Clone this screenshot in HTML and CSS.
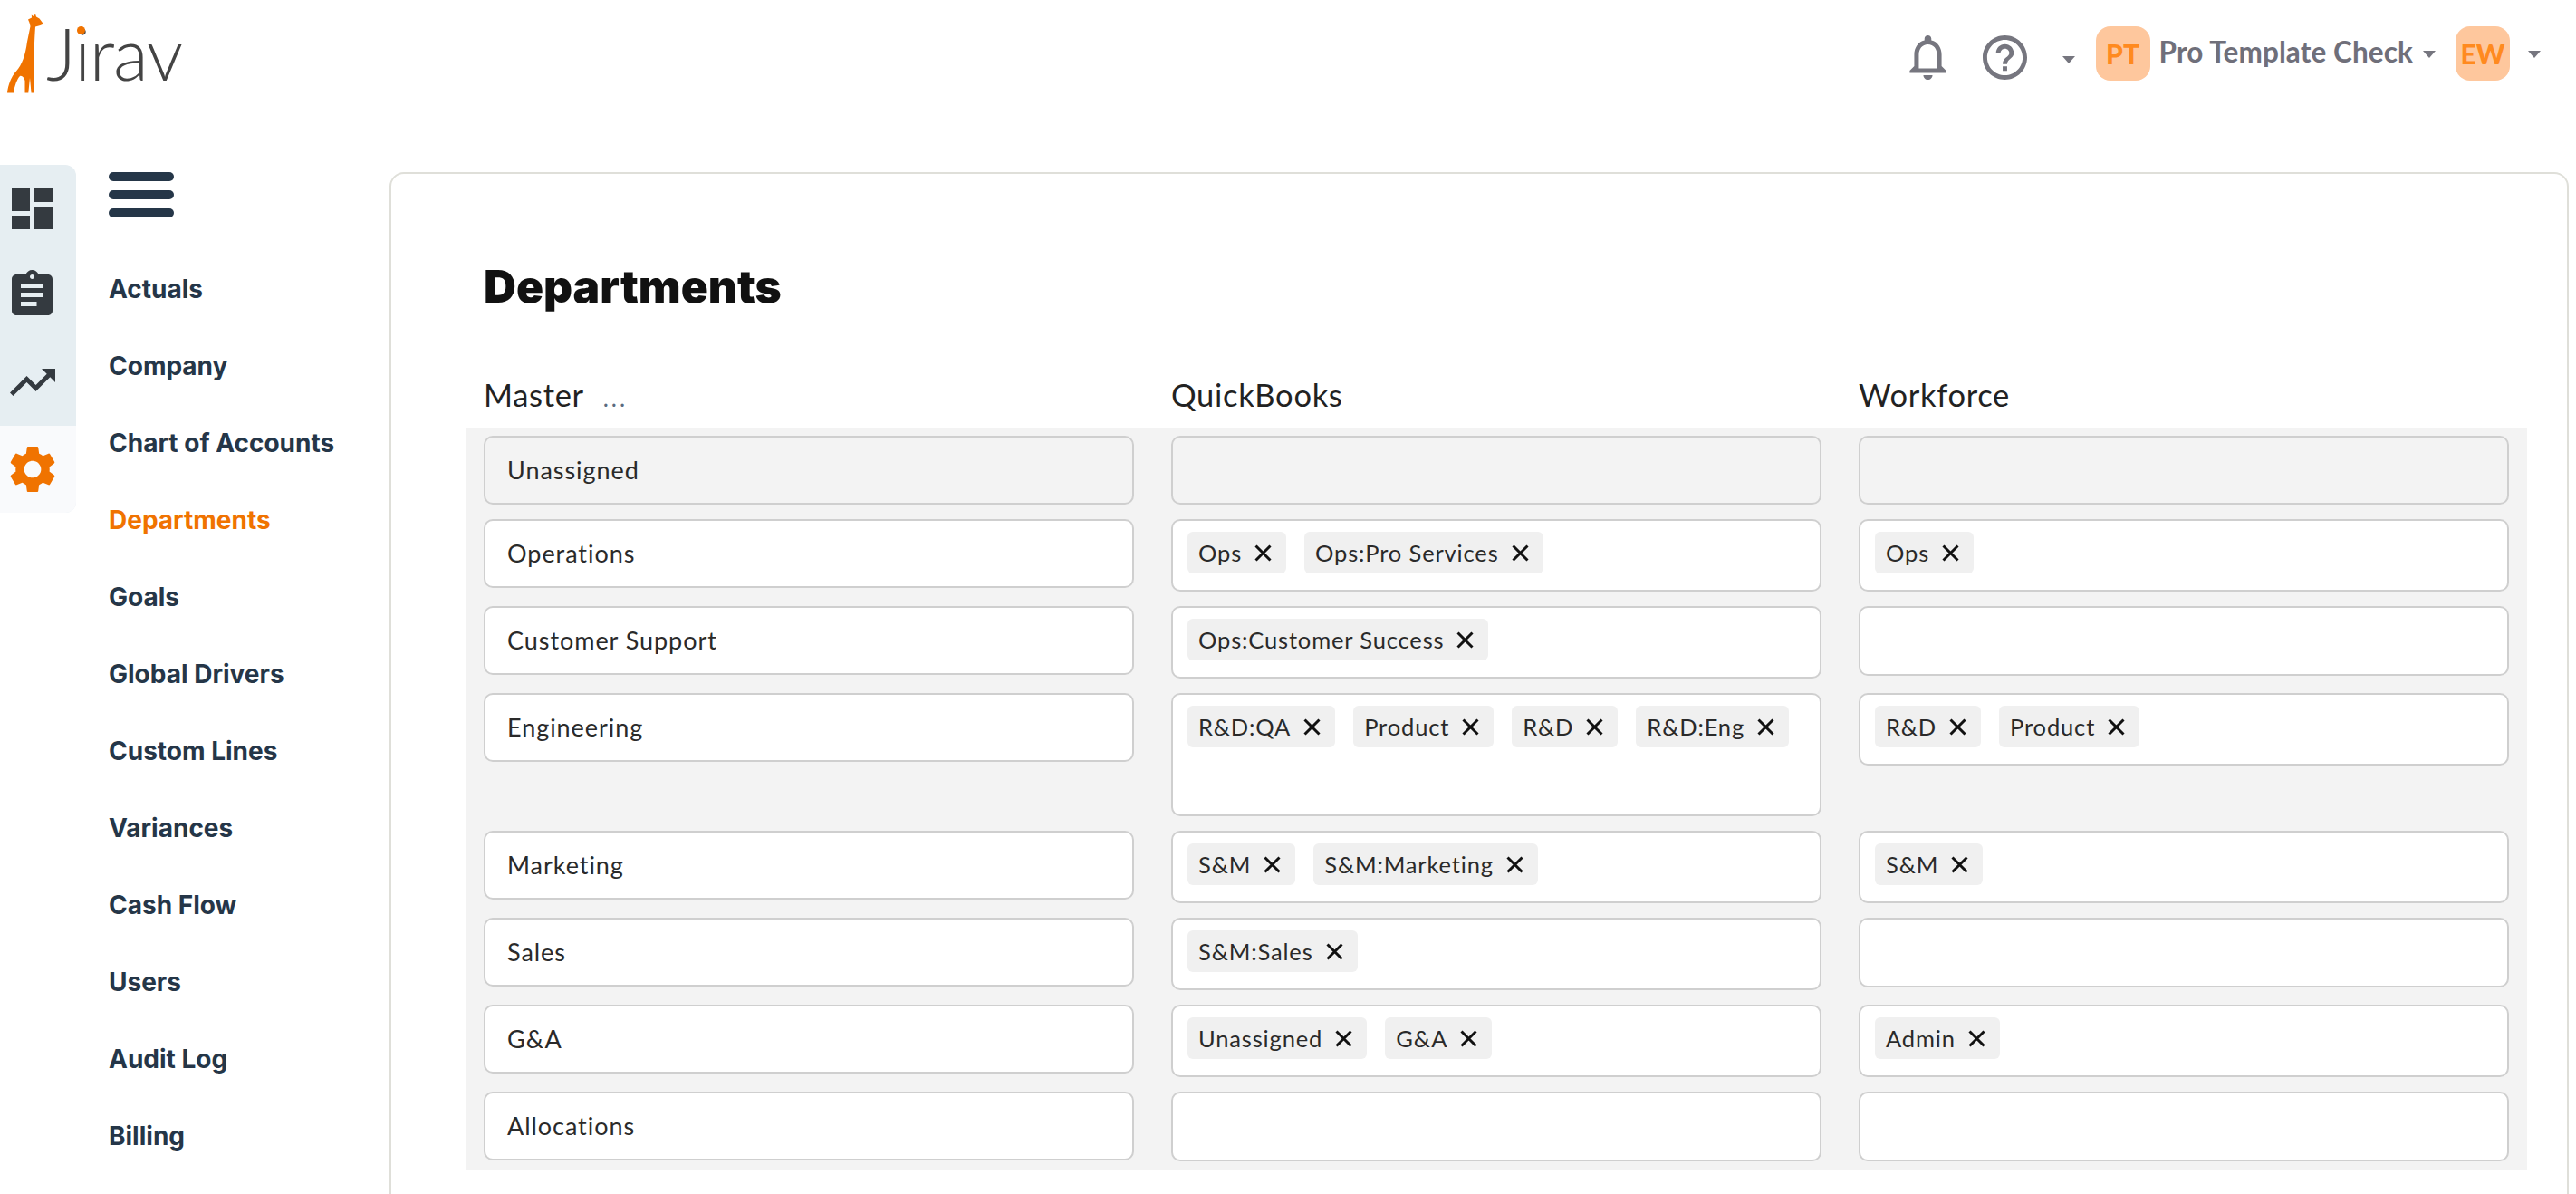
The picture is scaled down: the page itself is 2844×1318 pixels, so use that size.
FILE: index.html
```html
<!DOCTYPE html>
<html lang="en">
<head>
<meta charset="utf-8">
<title>Jirav - Departments</title>
<link rel="stylesheet" href="styles.css">
</head>
<body>
<header class="topbar">
  <a class="logo">
    <svg class="giraffe" viewBox="0 0 42 90" aria-hidden="true"><path d="M23 6.500 L27 4.500 L26.800 1.500 L29 3 L31 .5 L32 3.500 L35.500 5.500 L40 11.500 L36.500 13 L31 14.500 C30 30 29.300 45 29.500 63 L30 87.500 L26.500 87.500 L25 71 L23.300 87.500 L19.500 87.500 L19.500 74 C18.500 71 16.500 68 14 69 C11 72 8 80 7 87.500 L0 87.500 C1 79 4 70 10 63.500 C16 57 20 46 22 31 L25.500 14 L24.500 10 Z"/></svg>
    <span class="wordmark">Jirav<span class="i-dot"></span></span>
  </a>
  <div class="actions">
    <svg class="icon-bell" viewBox="4 2.500 16 19.500" aria-hidden="true"><path d="M12 22c1.100 0 2-.9 2-2h-4c0 1.100.9 2 2 2zm6-6v-5c0-3.070-1.630-5.640-4.500-6.320V4c0-.83-.67-1.500-1.500-1.500s-1.500.67-1.500 1.500v.68C7.640 5.360 6 7.920 6 11v5l-2 2v1h16v-1l-2-2zm-2 1H8v-6c0-2.480 1.510-4.500 4-4.500s4 2.020 4 4.500v6z"/></svg>
    <svg class="icon-help" viewBox="2 2 20 20" aria-hidden="true"><path d="M11 18h2v-2h-2v2zm1-16C6.480 2 2 6.480 2 12s4.480 10 10 10 10-4.480 10-10S17.520 2 12 2zm0 18c-4.410 0-8-3.590-8-8s3.590-8 8-8 8 3.590 8 8-3.590 8-8 8zm0-14c-2.210 0-4 1.790-4 4h2c0-1.100.9-2 2-2s2 .9 2 2c0 2-3 1.750-3 5h2c0-2.250 3-2.500 3-5 0-2.210-1.790-4-4-4z"/></svg>
    <span class="caret caret-help"></span>
    <span class="avatar avatar-org">PT</span>
    <span class="org-name">Pro Template Check</span>
    <span class="caret caret-org"></span>
    <span class="avatar avatar-user">EW</span>
    <span class="caret caret-user"></span>
  </div>
</header>

<div class="body">
  <aside class="rail">
    <div class="rail-item"><svg class="rail-dash" viewBox="3 3 18 18" aria-hidden="true"><path d="M3 13h8V3H3v10zm0 8h8v-6H3v6zm10 0h8V11h-8v10zm0-18v6h8V3h-8z"/></svg></div>
    <div class="rail-item rail-item-raised"><svg class="rail-clip" viewBox="3 1 18 20" aria-hidden="true"><path d="M19 3h-4.180C14.400 1.840 13.300 1 12 1c-1.300 0-2.400.84-2.820 2H5c-1.100 0-2 .9-2 2v14c0 1.100.9 2 2 2h14c1.100 0 2-.9 2-2V5c0-1.100-.9-2-2-2zm-7 0c.55 0 1 .45 1 1s-.45 1-1 1-1-.45-1-1 .45-1 1-1zm2 14H7v-2h7v2zm3-4H7v-2h10v2zm0-4H7V7h10v2z"/></svg></div>
    <div class="rail-item"><svg class="rail-trend" viewBox="2 6 20 12" aria-hidden="true"><path d="M16 6l2.290 2.290-4.880 4.880-4-4L2 16.590 3.410 18l6-6 4 4 6.300-6.290L22 12V6z"/></svg></div>
    <div class="rail-item rail-item-active"><svg class="rail-gear" viewBox="2.500 2 19 20" aria-hidden="true"><path d="M19.140 12.940c.04-.3.06-.61.06-.94 0-.32-.02-.64-.07-.94l2.030-1.580c.18-.14.23-.41.12-.61l-1.920-3.320c-.12-.22-.37-.29-.59-.22l-2.390.96c-.5-.38-1.030-.7-1.620-.94l-.36-2.540c-.04-.24-.24-.41-.48-.41h-3.840c-.24 0-.43.17-.47.41l-.36 2.540c-.59.24-1.130.57-1.620.94l-2.390-.96c-.22-.08-.47 0-.59.22L2.740 8.870c-.12.21-.08.47.12.61l2.030 1.580c-.05.3-.09.63-.09.94s.02.64.07.94l-2.030 1.580c-.18.14-.23.41-.12.61l1.920 3.320c.12.22.37.29.59.22l2.390-.96c.5.38 1.030.7 1.620.94l.36 2.540c.05.24.24.41.48.41h3.840c.24 0 .44-.17.47-.41l.36-2.540c.59-.24 1.130-.56 1.620-.94l2.390.96c.22.08.47 0 .59-.22l1.920-3.320c.12-.22.07-.47-.12-.61l-2.010-1.580zM12 15.600c-1.980 0-3.600-1.620-3.600-3.600s1.620-3.600 3.600-3.600 3.600 1.620 3.600 3.600-1.620 3.600-3.600 3.600z"/></svg></div>
  </aside>

  <nav class="nav">
    <div class="hamburger"><span></span><span></span><span></span></div>
    <ul class="nav-list">
      <li>Actuals</li>
      <li>Company</li>
      <li>Chart of Accounts</li>
      <li class="is-active">Departments</li>
      <li>Goals</li>
      <li>Global Drivers</li>
      <li>Custom Lines</li>
      <li>Variances</li>
      <li>Cash Flow</li>
      <li>Users</li>
      <li>Audit Log</li>
      <li>Billing</li>
    </ul>
  </nav>

  <main class="card">
    <h1 class="title">Departments</h1>
    <div class="col-heads">
      <div class="col-head">Master <span class="more">...</span></div>
      <div class="col-head">QuickBooks</div>
      <div class="col-head">Workforce</div>
    </div>
    <div class="map-grid">
      <div class="field is-disabled">Unassigned</div>
      <div class="multi is-disabled"></div>
      <div class="multi is-disabled"></div>

      <div class="field">Operations</div>
      <div class="multi">
        <span class="tag">Ops<svg class="x" viewBox="0 0 19 19"><path d="M1.500 1.500l16 16M17.500 1.500l-16 16"/></svg></span>
        <span class="tag">Ops:Pro Services<svg class="x" viewBox="0 0 19 19"><path d="M1.500 1.500l16 16M17.500 1.500l-16 16"/></svg></span>
      </div>
      <div class="multi">
        <span class="tag">Ops<svg class="x" viewBox="0 0 19 19"><path d="M1.500 1.500l16 16M17.500 1.500l-16 16"/></svg></span>
      </div>

      <div class="field">Customer Support</div>
      <div class="multi">
        <span class="tag">Ops:Customer Success<svg class="x" viewBox="0 0 19 19"><path d="M1.500 1.500l16 16M17.500 1.500l-16 16"/></svg></span>
      </div>
      <div class="multi"></div>

      <div class="field">Engineering</div>
      <div class="multi multi-tall">
        <span class="tag">R&amp;D:QA<svg class="x" viewBox="0 0 19 19"><path d="M1.500 1.500l16 16M17.500 1.500l-16 16"/></svg></span>
        <span class="tag">Product<svg class="x" viewBox="0 0 19 19"><path d="M1.500 1.500l16 16M17.500 1.500l-16 16"/></svg></span>
        <span class="tag">R&amp;D<svg class="x" viewBox="0 0 19 19"><path d="M1.500 1.500l16 16M17.500 1.500l-16 16"/></svg></span>
        <span class="tag">R&amp;D:Eng<svg class="x" viewBox="0 0 19 19"><path d="M1.500 1.500l16 16M17.500 1.500l-16 16"/></svg></span>
      </div>
      <div class="multi">
        <span class="tag">R&amp;D<svg class="x" viewBox="0 0 19 19"><path d="M1.500 1.500l16 16M17.500 1.500l-16 16"/></svg></span>
        <span class="tag">Product<svg class="x" viewBox="0 0 19 19"><path d="M1.500 1.500l16 16M17.500 1.500l-16 16"/></svg></span>
      </div>

      <div class="field">Marketing</div>
      <div class="multi">
        <span class="tag">S&amp;M<svg class="x" viewBox="0 0 19 19"><path d="M1.500 1.500l16 16M17.500 1.500l-16 16"/></svg></span>
        <span class="tag">S&amp;M:Marketing<svg class="x" viewBox="0 0 19 19"><path d="M1.500 1.500l16 16M17.500 1.500l-16 16"/></svg></span>
      </div>
      <div class="multi">
        <span class="tag">S&amp;M<svg class="x" viewBox="0 0 19 19"><path d="M1.500 1.500l16 16M17.500 1.500l-16 16"/></svg></span>
      </div>

      <div class="field">Sales</div>
      <div class="multi">
        <span class="tag">S&amp;M:Sales<svg class="x" viewBox="0 0 19 19"><path d="M1.500 1.500l16 16M17.500 1.500l-16 16"/></svg></span>
      </div>
      <div class="multi"></div>

      <div class="field">G&amp;A</div>
      <div class="multi">
        <span class="tag">Unassigned<svg class="x" viewBox="0 0 19 19"><path d="M1.500 1.500l16 16M17.500 1.500l-16 16"/></svg></span>
        <span class="tag">G&amp;A<svg class="x" viewBox="0 0 19 19"><path d="M1.500 1.500l16 16M17.500 1.500l-16 16"/></svg></span>
      </div>
      <div class="multi">
        <span class="tag">Admin<svg class="x" viewBox="0 0 19 19"><path d="M1.500 1.500l16 16M17.500 1.500l-16 16"/></svg></span>
      </div>

      <div class="field">Allocations</div>
      <div class="multi multi-empty"></div>
      <div class="multi multi-empty"></div>
    </div>
  </main>
</div>
</body>
</html>
```

FILE: styles.css
```css
* { box-sizing: border-box; }

html, body {
  margin: 0;
  height: 100%;
  overflow: hidden;
  background: #fff;
}

body {
  display: flex;
  flex-direction: column;
  font-family: "Lato", "Open Sans", sans-serif;
  color: #222;
}

/* top bar */
.topbar {
  flex: 0 0 182px;
  display: flex;
  align-items: flex-start;
  justify-content: space-between;
}

.logo {
  position: relative;
  display: flex;
  align-items: flex-start;
  padding: 15px 0 0 8px;
}

.giraffe {
  width: 42px;
  height: 90px;
  fill: #f07300;
}

.wordmark {
  position: relative;
  margin: -5px 0 0 1px;
  font-family: "Lato", sans-serif;
  font-weight: 300;
  font-size: 80px;
  line-height: 96px;
  letter-spacing: -1.2px;
  color: #444;
}

.i-dot {
  position: absolute;
  left: 34px;
  top: 19px;
  width: 9px;
  height: 9px;
  border-radius: 50%;
  background: #f07300;
}

.actions {
  display: flex;
  align-items: flex-start;
  padding: 29px 39px 0 0;
  fill: #76767f;
}

.icon-bell {
  width: 41px;
  height: 49px;
  margin-top: 10px;
}

.icon-help {
  width: 49px;
  height: 49px;
  margin: 10px 0 0 40px;
}

.caret {
  width: 0;
  height: 0;
  border-left: 7px solid transparent;
  border-right: 7px solid transparent;
  border-top: 8px solid #76767f;
}

.caret-help { margin: 33px 23px 0 39px; }
.caret-org { margin: 27px 22px 0 11px; }
.caret-user { margin: 27px 0 0 20px; }

.avatar {
  width: 60px;
  height: 60px;
  border-radius: 16px;
  background: #fec79d;
  color: #ff8a1f;
  font-weight: 900;
  font-size: 30px;
  line-height: 60px;
  text-align: center;
}

.org-name {
  margin-left: 10px;
  font-weight: 700;
  font-size: 31.500px;
  letter-spacing: .1px;
  line-height: 56px;
  color: #6f6f7a;
}

/* layout under the bar */
.body {
  flex: 1;
  display: flex;
  align-items: flex-start;
  min-height: 0;
}

/* icon rail */
.rail {
  flex: 0 0 84px;
  border-radius: 0 12px 12px 0;
  overflow: hidden;
  background: #e6eef2;
}

.rail-item {
  height: 96px;
  padding-right: 13px;
  display: flex;
  align-items: center;
  justify-content: center;
  fill: #343a40;
}

.rail-item-raised { padding-bottom: 6px; }

.rail-item-active {
  background: #f9fafc;
  fill: #f07300;
}

.rail-dash { width: 45px; height: 45px; }
.rail-clip { width: 45px; height: 50px; }
.rail-trend { width: 50px; height: 30px; }
.rail-gear { width: 50px; height: 52px; }

/* text nav */
.nav {
  flex: 0 0 346px;
  padding: 8px 0 0 36px;
}

.hamburger {
  display: flex;
  flex-direction: column;
  gap: 10px;
  width: 72px;
}

.hamburger span {
  height: 10px;
  border-radius: 5px;
  background: #253648;
}

.nav-list {
  list-style: none;
  margin: 37px 0 0;
  padding: 0;
  font-family: "Inter", sans-serif;
  font-weight: 700;
  font-size: 28px;
  line-height: 85px;
  color: #253648;
}

.nav-list .is-active { color: #f07300; }

/* content card */
.card {
  flex: 1;
  height: 1200px;
  margin: 8px 8px 0 0;
  padding: 0 44px 0 82px;
  border: 2px solid #dfdfd9;
  border-radius: 16px;
}

.title {
  margin: 0;
  padding: 94px 0 0 20px;
  font-family: "Inter", sans-serif;
  font-weight: 900;
  font-size: 49.700px;
  line-height: 60px;
  color: #111;
}

.col-heads,
.map-grid {
  display: grid;
  grid-template-columns: repeat(3, 718px);
  column-gap: 41px;
}

.col-heads {
  margin-top: 51px;
  padding: 19px 20px 0;
  height: 76px;
}

.col-head {
  font-size: 34.500px;
  line-height: 40px;
  letter-spacing: .7px;
  color: #222;
}

.more {
  margin-left: 12px;
  font-size: 26px;
  letter-spacing: 3px;
  color: #5a6b80;
}

.map-grid {
  align-items: start;
  row-gap: 16px;
  padding: 8px 20px 9px;
  background: #f3f3f3;
}

.field,
.multi {
  border: 2px solid #cfcfcf;
  border-radius: 10px;
  background: #fff;
}

.field {
  height: 76px;
  padding: 0 24px;
  font-size: 27px;
  line-height: 72px;
  letter-spacing: .95px;
  color: #2a2a2a;
}

.multi {
  display: flex;
  flex-wrap: wrap;
  align-content: flex-start;
  gap: 20px;
  min-height: 80px;
  padding: 12px 16px;
}

.multi:empty { min-height: 77px; }
.multi-tall { min-height: 136px; }

.field.is-disabled,
.multi.is-disabled {
  min-height: 76px;
  background: #f3f3f3;
}

.tag {
  display: flex;
  align-items: center;
  gap: 14px;
  height: 46px;
  padding: 0 16px 0 12px;
  border-radius: 6px;
  background: #f0f0f0;
  font-size: 25.500px;
  letter-spacing: .85px;
  color: #2a2a2a;
}

.x {
  width: 19px;
  height: 19px;
  fill: none;
  stroke: #111;
  stroke-width: 3;
}
```
